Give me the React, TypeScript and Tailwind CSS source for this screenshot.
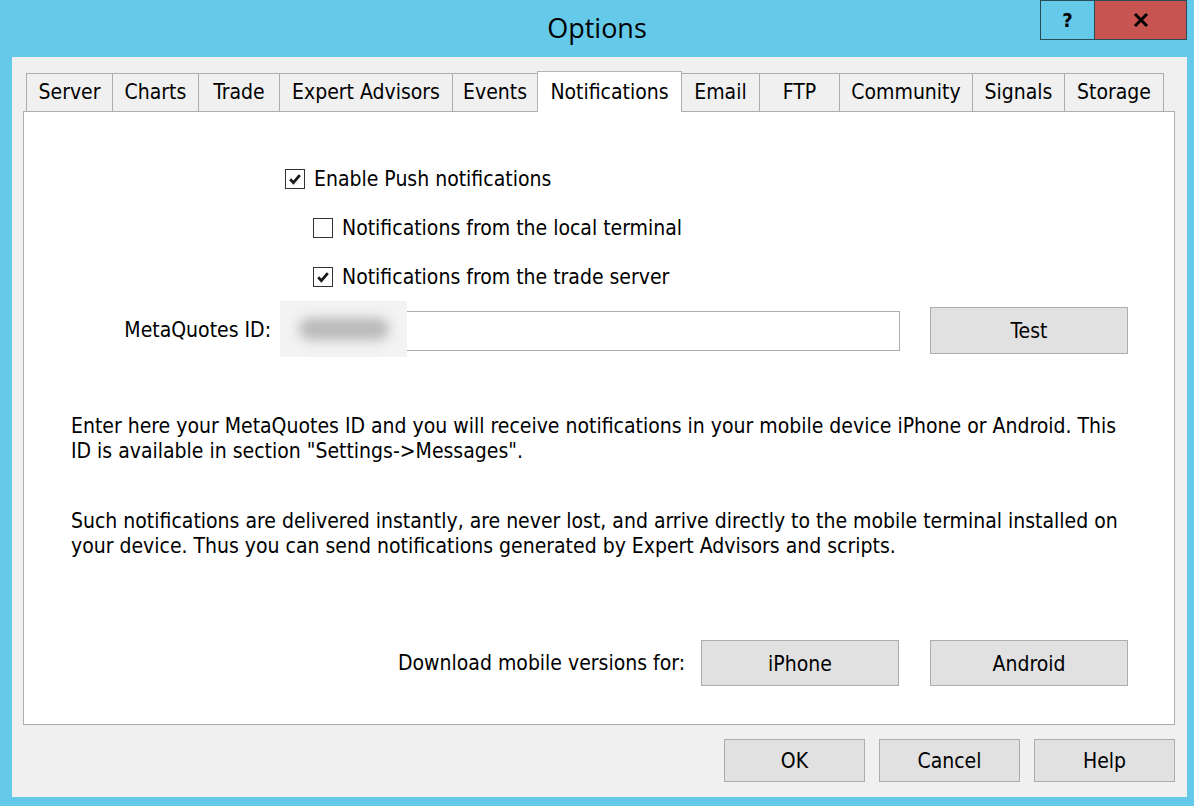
import React from 'react';

const tabs = [
  { title: 'Server', w: 'w-[87px]' },
  { title: 'Charts', w: 'w-[87px]' },
  { title: 'Trade', w: 'w-[82px]' },
  { title: 'Expert Advisors', w: 'w-[174px]' },
  { title: 'Events', w: 'w-[86px]' },
  { title: 'Notifications', w: 'w-[145px]', active: true },
  { title: 'Email', w: 'w-[79px]' },
  { title: 'FTP', w: 'w-[81px]' },
  { title: 'Community', w: 'w-[134px]' },
  { title: 'Signals', w: 'w-[93px]' },
  { title: 'Storage', w: 'w-[100px]' },
];

const font = { fontFamily: 'Tahoma, "DejaVu Sans Condensed", "DejaVu Sans", sans-serif' };

const CheckBox = ({ checked, label }: { checked: boolean; label: string }) => (
  <div className="flex items-center h-[20px]">
    <div className="w-[20px] h-[20px] border border-[#333333] bg-white flex items-center justify-center">
      {checked && (
        <svg width="14" height="14" viewBox="0 0 14 14">
          <path d="M2.2 7.2 L5.4 10.6 L11.8 3.2" fill="none" stroke="#1a1a1a" strokeWidth="2.8" />
        </svg>
      )}
    </div>
    <span className="ml-[9px] text-[21px] leading-none text-black">{label}</span>
  </div>
);

const WinButton = ({ label, className = '' }: { label: string; className?: string }) => (
  <div
    className={`flex items-center justify-center pt-[3px] bg-[#e1e1e1] border border-[#adadad] text-[21px] text-black ${className}`}
  >
    {label}
  </div>
);

export default function App() {
  return (
    <div className="w-[1194px] h-[806px] bg-[#65c9ea] flex flex-col overflow-hidden" style={font}>
      {/* title bar */}
      <div className="relative h-[57px] shrink-0">
        <div
          className="text-center text-[27px] leading-none pt-[14px] text-black"
          style={{ fontFamily: '"Segoe UI", "Open Sans", "Noto Sans", sans-serif' }}
        >
          Options
        </div>
        <div className="absolute top-0 right-[7px] flex">
          <div className="w-[54px] h-[40px] border border-[#2a4a5a] border-r-0 flex items-center justify-center text-[20px] font-bold text-black">
            ?
          </div>
          <div className="w-[93px] h-[40px] bg-[#c75450] border border-[#2a4a5a] flex items-center justify-center">
            <svg width="16" height="16" viewBox="0 0 16 16">
              <path d="M2 2 L14 14 M14 2 L2 14" stroke="#000" strokeWidth="3" />
            </svg>
          </div>
        </div>
      </div>

      {/* client area */}
      <div className="mx-[12px] w-[1175px] h-[740px] bg-[#f0f0f0] flex flex-col">
        {/* tabs */}
        <div className="flex items-end pl-[14px] pt-[14px] h-[54px] relative z-10">
          {tabs.map((t, i) =>
            t.active ? (
              <div
                key={t.title}
                className={`${t.w} h-[41px] -mb-[1px] -ml-[1px] bg-white border border-[#b4b4b4] border-b-0 flex items-start justify-center pt-[5px] text-[21px] text-black`}
              >
                {t.title}
              </div>
            ) : (
              <div
                key={t.title}
                className={`${t.w} h-[38px] bg-[#f0f0f0] border border-[#adadad] border-b-0 ${
                  i === 0 ? '' : '-ml-[1px]'
                } flex items-center justify-center pt-[1px] text-[21px] text-black`}
              >
                {t.title}
              </div>
            )
          )}
        </div>

        {/* panel */}
        <div className="ml-[11px] w-[1152px] h-[614px] bg-white border border-[#adadad] flex flex-col text-black">
          <div className="ml-[261px] mt-[57px] flex flex-col gap-[29px]">
            <CheckBox checked label="Enable Push notifications" />
            <div className="ml-[28px] flex flex-col gap-[29px]">
              <CheckBox checked={false} label="Notifications from the local terminal" />
              <CheckBox checked label="Notifications from the trade server" />
            </div>
          </div>

          <div className="flex items-center mt-[16px] h-[55px]">
            <div className="w-[247px] text-right text-[21px]">MetaQuotes ID:</div>
            <div className="relative ml-[10px] w-[619px] h-[40px] border border-[#adadad] bg-white">
              <div className="absolute -left-[2px] -top-[11px] w-[127px] h-[56px] bg-[#f3f3f3] flex items-center justify-center">
                <div className="w-[90px] h-[22px] rounded-full bg-[#b9b9b9] blur-[6px]" />
              </div>
            </div>
            <WinButton label="Test" className="ml-[30px] w-[198px] h-[47px]" />
          </div>

          <div className="ml-[47px] mt-[56px] text-[21px] leading-[25px]">
            Enter here your MetaQuotes ID and you will receive notifications in your mobile device iPhone or Android. This
            <br />
            ID is available in section "Settings-&gt;Messages".
          </div>
          <div className="ml-[47px] mt-[45px] text-[21px] leading-[25px]">
            Such notifications are delivered instantly, are never lost, and arrive directly to the mobile terminal installed on
            <br />
            your device. Thus you can send notifications generated by Expert Advisors and scripts.
          </div>

          <div className="flex items-center mt-[81px]">
            <div className="w-[661px] text-right text-[21px] pt-[1px]">Download mobile versions for:</div>
            <WinButton label="iPhone" className="ml-[16px] w-[198px] h-[46px]" />
            <WinButton label="Android" className="ml-[31px] w-[198px] h-[46px]" />
          </div>
        </div>

        {/* dialog buttons */}
        <div className="flex justify-end mt-[14px] mr-[12px] gap-[14px]">
          <WinButton label="OK" className="w-[141px] h-[43px] border-[#3c7fb1]" />
          <WinButton label="Cancel" className="w-[141px] h-[43px]" />
          <WinButton label="Help" className="w-[141px] h-[43px]" />
        </div>
      </div>
    </div>
  );
}
